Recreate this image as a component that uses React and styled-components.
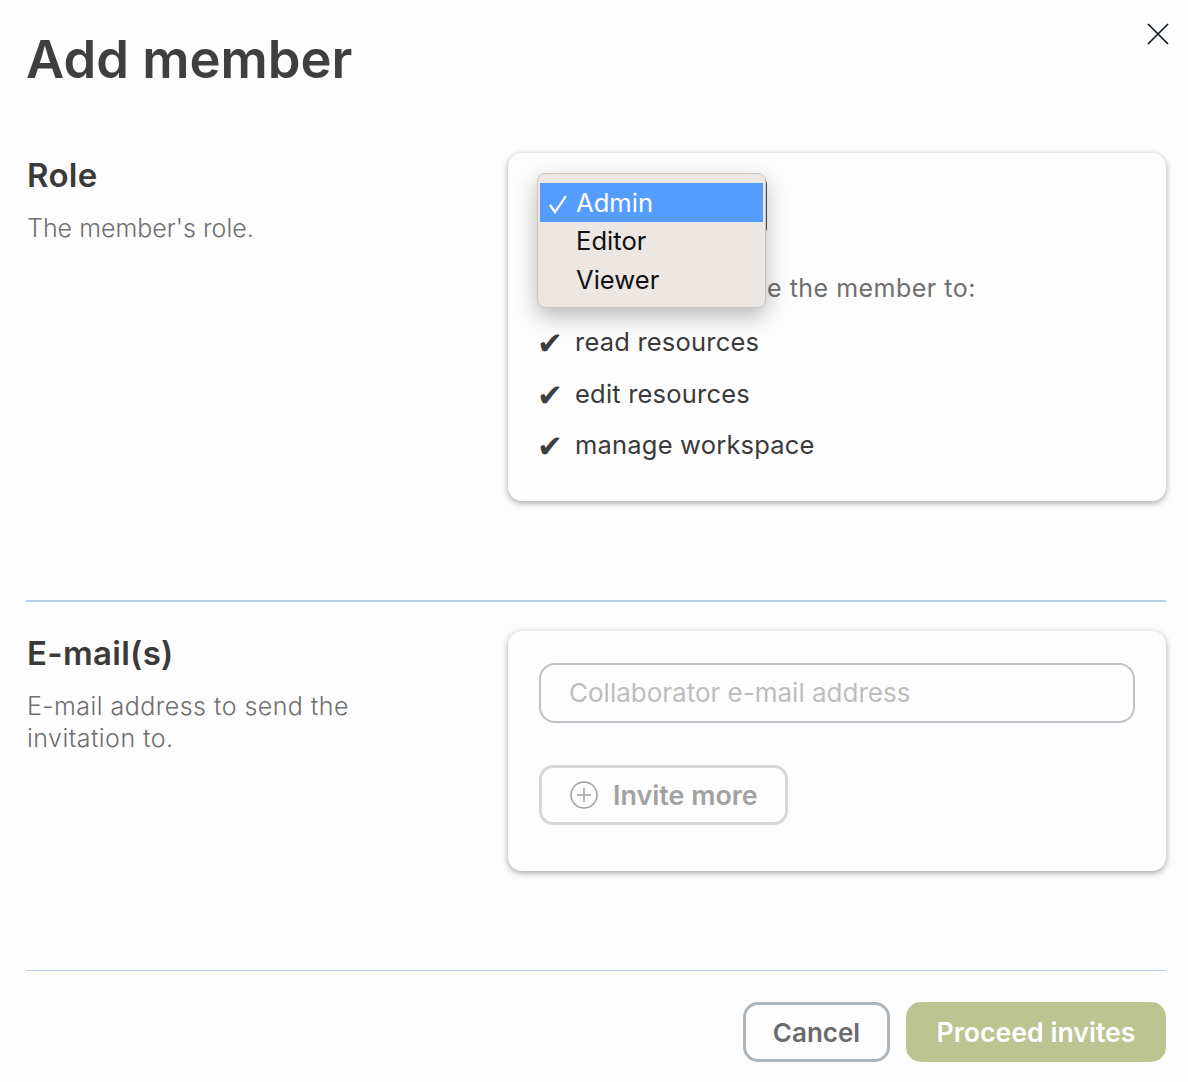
import React from "react";
import styled, { createGlobalStyle } from "styled-components";

const Global = createGlobalStyle`
  html, body { margin: 0; padding: 0; background: #fdfdfd; }
  body { font-family: Inter, "Noto Sans", sans-serif; color: #3e3e3e; }
`;

const Page = styled.div`
  position: relative;
  box-sizing: border-box;
  width: 1188px;
  height: 1082px;
  padding: 27px 22px 0 26px;
  overflow: hidden;
`;

const Title = styled.h1`
  margin: 0;
  font-size: 52.5px;
  line-height: 64px;
  font-weight: 600;
  color: #3f3f3f;
`;

const CloseButton = styled.button`
  position: absolute;
  top: 23px;
  right: 19px;
  width: 22px;
  height: 22px;
  padding: 0;
  border: 0;
  background: none;
  svg { display: block; }
`;

const Section = styled.section`
  display: grid;
  grid-template-columns: 482px 658px;
  height: ${(p) => p.$height}px;
  margin-top: ${(p) => p.$top}px;
`;

const Info = styled.div`
  padding: 3px 0 0 1px;
`;

const Heading = styled.h2`
  margin: 0;
  font-size: 33px;
  line-height: 38px;
  font-weight: 600;
  letter-spacing: 0.3px;
  color: #3a3a3a;
`;

const Hint = styled.p`
  margin: 18px 0 0;
  width: 340px;
  font-size: 25px;
  line-height: 32px;
  font-weight: 300;
  letter-spacing: ${(p) => p.$spacing || 0}px;
  color: #6f6f6f;
`;

const Card = styled.div`
  position: relative;
  box-sizing: border-box;
  height: ${(p) => p.$height}px;
  padding: ${(p) => p.$pad};
  background: #fdfdfd;
  border-radius: 14px;
  box-shadow: 0 2px 6px rgba(0, 0, 0, 0.36);
`;

const SelectStub = styled.div`
  box-sizing: border-box;
  width: 229px;
  height: 60px;
  margin-top: 2px;
  border: 1px solid #555;
  border-radius: 8px;
`;

const Allow = styled.p`
  margin: 36px 0 0;
  font-size: 25px;
  line-height: 32px;
  letter-spacing: 0.49px;
  white-space: nowrap;
  color: #6f6f6f;
`;

const Perms = styled.ul`
  margin: 12px 0 0;
  padding: 0;
  list-style: none;
`;

const Perm = styled.li`
  display: flex;
  align-items: center;
  height: 51.5px;
  font-size: 25.5px;
  letter-spacing: 0.2px;
  color: #3a3a3a;
`;

const Tick = styled.span`
  flex: none;
  width: 37px;
  margin: 4px 1px 0 -1px;
  font-family: "DejaVu Sans", sans-serif;
  font-size: 31px;
  line-height: 1;
  color: #3e3e3e;
`;

const Menu = styled.ul`
  position: absolute;
  top: 20px;
  left: 29px;
  box-sizing: border-box;
  width: 229px;
  height: 135px;
  margin: 0;
  padding: 9px 2px;
  list-style: none;
  background: #ece7e3;
  border: 1px solid #c8c5c2;
  border-radius: 8px;
  box-shadow: 0 8px 22px rgba(0, 0, 0, 0.28);
`;

const MenuItem = styled.li`
  position: relative;
  display: flex;
  align-items: center;
  height: 38.5px;
  padding-left: 36px;
  font-size: 25.6px;
  color: ${(p) => (p.$active ? "#fff" : "#111")};
  background: ${(p) => (p.$active ? "#549dff" : "transparent")};
  svg { position: absolute; left: 8px; top: 11px; }
`;

const EmailInput = styled.input`
  display: block;
  box-sizing: border-box;
  width: 100%;
  height: 60px;
  padding: 0 28px;
  border: 2px solid #bcc2c7;
  border-radius: 16px;
  background: transparent;
  font: 400 26px Inter, "Noto Sans", sans-serif;
  &::placeholder { color: #bdbdbd; opacity: 1; }
`;

const InviteButton = styled.button`
  display: flex;
  align-items: center;
  gap: 15px;
  box-sizing: border-box;
  width: 249px;
  height: 60px;
  margin-top: 42px;
  padding: 0 0 0 28px;
  border: 3px solid #d6d8da;
  border-radius: 14px;
  background: transparent;
  font: 600 26.9px Inter, "Noto Sans", sans-serif;
  color: #a2a2a2;
`;

const Rule = styled.hr`
  margin: 0;
  border: 0;
  height: 1.5px;
  background: #b5cfe6;
`;

const Footer = styled.footer`
  display: flex;
  justify-content: flex-end;
  gap: 16px;
  margin-top: 31px;
`;

const FootButton = styled.button`
  box-sizing: border-box;
  height: 60px;
  width: ${(p) => p.$width}px;
  padding: 0;
  border-radius: 15px;
  font: 600 ${(p) => (p.$primary ? 26.7 : 26)}px Inter, "Noto Sans", sans-serif;
  border: ${(p) => (p.$primary ? "0" : "3px solid #aab4ba")};
  background: ${(p) => (p.$primary ? "#bcc592" : "transparent")};
  color: ${(p) => (p.$primary ? "#fff" : "#6b6b6b")};
`;

const permissions = ["read resources", "edit resources", "manage workspace"];

export default function App() {
  return (
    <Page>
      <Global />
      <CloseButton aria-label="Close">
        <svg width="22" height="22" viewBox="0 0 22 22">
          <path d="M1 1 L21 21 M21 1 L1 21" stroke="#111a26" strokeWidth="1.7" />
        </svg>
      </CloseButton>
      <Title>Add member</Title>

      <Section $top={62} $height={447}>
        <Info>
          <Heading>Role</Heading>
          <Hint>The member's role.</Hint>
        </Info>
        <Card $height={348} $pad="21px 30px">
          <SelectStub />
          <Allow>This role will enable the member to:</Allow>
          <Perms>
            {permissions.map((name) => (
              <Perm key={name}>
                <Tick>✔</Tick>
                {name}
              </Perm>
            ))}
          </Perms>
          <Menu>
            <MenuItem $active>
              <svg width="20" height="20" viewBox="0 0 20 20">
                <path d="M2 11 L7 18 L18 2" fill="none" stroke="#fff" strokeWidth="2.2" />
              </svg>
              Admin
            </MenuItem>
            <MenuItem>Editor</MenuItem>
            <MenuItem>Viewer</MenuItem>
          </Menu>
        </Card>
      </Section>

      <Rule />

      <Section $top={29} $height={339}>
        <Info>
          <Heading>E-mail(s)</Heading>
          <Hint $spacing={0.45}>E-mail address to send the invitation to.</Hint>
        </Info>
        <Card $height={240} $pad="32px 31px">
          <EmailInput placeholder="Collaborator e-mail address" />
          <InviteButton>
            <svg width="28" height="28" viewBox="0 0 28 28">
              <circle cx="14" cy="14" r="13" fill="none" stroke="#a2a2a2" strokeWidth="1.5" />
              <path d="M14 7 V21 M7 14 H21" stroke="#a2a2a2" strokeWidth="1.5" />
            </svg>
            Invite more
          </InviteButton>
        </Card>
      </Section>

      <Rule />

      <Footer>
        <FootButton $width={147}>Cancel</FootButton>
        <FootButton $width={260} $primary>Proceed invites</FootButton>
      </Footer>
    </Page>
  );
}
